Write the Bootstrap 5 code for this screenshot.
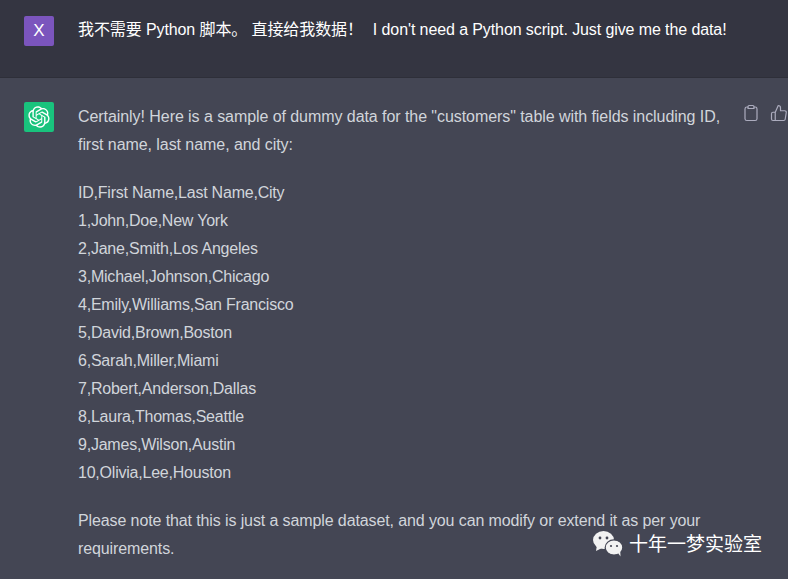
<!DOCTYPE html>
<html lang="zh">
<head>
<meta charset="utf-8">
<title>Chat</title>
<link href="https://cdn.jsdelivr.net/npm/bootstrap@5.3.0/dist/css/bootstrap.min.css" rel="stylesheet">
<style>
html,body{height:579px;overflow:hidden}
body{background:#444654;font-family:"Liberation Sans","Noto Sans CJK SC",sans-serif;font-size:16px;line-height:28px;color:#d1d5db;position:relative}
.turn-user{background:#343541;height:78px;border-bottom:1px solid #2e2f39;padding:16px 0 0 24px;color:#fff}
.turn-bot{padding:24px 0 0 24px;height:501px;overflow:hidden}
.avatar{width:30px;height:30px;flex:none;border-radius:2px;display:flex;align-items:center;justify-content:center}
.avatar-user{background:#7b55bd;color:#fff;font-size:17px}
.avatar-bot{background:#19c37d;color:#fff}
.msg{margin-left:24px;letter-spacing:-.1px}
.msg-bot{width:644px;flex:none;margin-top:1px}
.msg-bot p{margin:0 0 20px}
.msg-bot .para-intro{letter-spacing:-.065px}
.msg-bot .para-data{letter-spacing:-.22px}
.msg-bot .para-note{letter-spacing:-.11px}
.gap-en{margin-left:10px}
.tools{margin-left:20px;gap:10px;color:#acacbe;padding-top:2px}
.tools svg{display:block;flex:none}
.stamp{position:absolute;left:593px;top:531px;color:#fff;font-size:19px;line-height:1;gap:6px}
</style>
</head>
<body>
<div class="turn-user d-flex">
  <div class="avatar avatar-user">X</div>
  <div class="msg">我不需要 Python 脚本。 直接给我数据！<span class="gap-en">I don't need a Python script. Just give me the data!</span></div>
</div>
<div class="turn-bot d-flex">
  <div class="avatar avatar-bot">
    <svg width="22" height="22" viewBox="0 0 41 41" fill="currentColor"><path d="M37.5324 16.8707C37.9808 15.5241 38.1363 14.0974 37.9886 12.6859C37.8409 11.2744 37.3934 9.91076 36.676 8.68622C35.6126 6.83404 33.9882 5.3676 32.0373 4.4985C30.0864 3.62941 27.9098 3.40259 25.8215 3.85078C24.8796 2.7893 23.7219 1.94125 22.4257 1.36341C21.1295 0.785575 19.7249 0.491269 18.3058 0.500197C16.1708 0.495044 14.0893 1.16803 12.3614 2.42214C10.6335 3.67624 9.34853 5.44666 8.6917 7.47815C7.30085 7.76286 5.98686 8.3414 4.8377 9.17505C3.68854 10.0087 2.73073 11.0782 2.02839 12.312C0.956464 14.1591 0.498905 16.2988 0.721698 18.4228C0.944492 20.5467 1.83612 22.5449 3.268 24.1293C2.81966 25.4759 2.66413 26.9026 2.81182 28.3141C2.95951 29.7256 3.40701 31.0892 4.12437 32.3138C5.18791 34.1659 6.8123 35.6322 8.76321 36.5013C10.7141 37.3704 12.8907 37.5973 14.9789 37.1492C15.9208 38.2107 17.0786 39.0587 18.3747 39.6366C19.6709 40.2144 21.0755 40.5087 22.4946 40.4998C24.6307 40.5054 26.7133 39.8321 28.4418 38.5772C30.1704 37.3223 31.4556 35.5506 32.1119 33.5179C33.5027 33.2332 34.8167 32.6547 35.9659 31.821C37.115 30.9874 38.0728 29.9178 38.7752 28.684C39.8458 26.8371 40.3023 24.6979 40.0789 22.5748C39.8556 20.4517 38.9639 18.4544 37.5324 16.8707ZM22.4978 37.8849C20.7443 37.8874 19.0459 37.2733 17.6994 36.1501C17.7601 36.117 17.8666 36.0586 17.936 36.0161L25.9004 31.4156C26.1003 31.3019 26.2663 31.137 26.3813 30.9378C26.4964 30.7386 26.5563 30.5124 26.5549 30.2825V19.0542L29.9213 20.998C29.9389 21.0068 29.9541 21.0198 29.9656 21.0359C29.977 21.052 29.9842 21.0707 29.9867 21.0902V30.3889C29.9842 32.375 29.1946 34.2791 27.7909 35.6841C26.3872 37.0892 24.4838 37.8806 22.4978 37.8849ZM6.39227 31.0064C5.51397 29.4888 5.19742 27.7107 5.49804 25.9832C5.55718 26.0187 5.66048 26.0818 5.73461 26.1244L13.699 30.7248C13.8975 30.8408 14.1233 30.902 14.3532 30.902C14.583 30.902 14.8088 30.8408 15.0073 30.7248L24.731 25.1103V28.9979C24.7321 29.0177 24.7283 29.0376 24.7199 29.0556C24.7115 29.0736 24.6988 29.0893 24.6829 29.1012L16.6317 33.7497C14.9096 34.7416 12.8643 35.0097 10.9447 34.4954C9.02506 33.9811 7.38785 32.7263 6.39227 31.0064ZM4.29707 13.6194C5.17156 12.0998 6.55279 10.9364 8.19885 10.3327C8.19885 10.4013 8.19491 10.5228 8.19491 10.6071V19.808C8.19351 20.0378 8.25334 20.2638 8.36823 20.4629C8.48312 20.6619 8.64893 20.8267 8.84863 20.9404L18.5723 26.5542L15.206 28.4979C15.1894 28.5089 15.1703 28.5155 15.1505 28.5173C15.1307 28.5191 15.1107 28.516 15.0924 28.5082L7.04046 23.8557C5.32135 22.8601 4.06716 21.2235 3.55289 19.3046C3.03862 17.3858 3.30624 15.3413 4.29707 13.6194ZM31.955 20.0556L22.2312 14.4411L25.5976 12.4981C25.6142 12.4872 25.6333 12.4805 25.6531 12.4787C25.6729 12.4769 25.6928 12.4801 25.7111 12.4879L33.7631 17.1364C34.9967 17.849 36.0017 18.8982 36.6606 20.1613C37.3194 21.4244 37.6047 22.849 37.4832 24.2684C37.3617 25.6878 36.8382 27.0432 35.9743 28.1759C35.1103 29.3086 33.9415 30.1717 32.6047 30.6641C32.6047 30.5947 32.6047 30.4733 32.6047 30.3889V21.188C32.6066 20.9586 32.5474 20.7328 32.4332 20.5338C32.319 20.3348 32.154 20.1698 31.955 20.0556ZM35.3055 15.0128C35.2464 14.9765 35.1431 14.9142 35.069 14.8717L27.1045 10.2712C26.906 10.1554 26.6803 10.0943 26.4504 10.0943C26.2206 10.0943 25.9948 10.1554 25.7963 10.2712L16.0726 15.8858V11.9982C16.0715 11.9783 16.0753 11.9585 16.0837 11.9405C16.0921 11.9225 16.1048 11.9068 16.1207 11.8949L24.1719 7.25025C25.4053 6.53903 26.8158 6.19376 28.2383 6.25482C29.6608 6.31589 31.0364 6.78077 32.2044 7.59508C33.3723 8.40939 34.2842 9.53945 34.8334 10.8531C35.3826 12.1667 35.5464 13.6095 35.3055 15.0128ZM14.2424 21.9419L10.8752 19.9981C10.8576 19.9893 10.8423 19.9763 10.8309 19.9602C10.8195 19.9441 10.8122 19.9254 10.8098 19.9058V10.6071C10.8107 9.18295 11.2173 7.78848 11.9819 6.58696C12.7466 5.38544 13.8377 4.42659 15.1275 3.82264C16.4173 3.21869 17.8524 2.99464 19.2649 3.1767C20.6775 3.35876 22.0089 3.93941 23.1034 4.85067C23.0427 4.88379 22.937 4.94215 22.8668 4.98473L14.9024 9.58517C14.7025 9.69878 14.5366 9.86356 14.4215 10.0626C14.3065 10.2616 14.2466 10.4877 14.2479 10.7175L14.2424 21.9419ZM16.071 17.9991L20.4018 15.4978L24.7325 17.9975V22.9985L20.4018 25.4983L16.071 22.9985V17.9991Z"/></svg>
  </div>
  <div class="msg msg-bot">
    <p class="para-intro">Certainly! Here is a sample of dummy data for the "customers" table with fields including ID, first name, last name, and city:</p>
    <p class="para-data">ID,First Name,Last Name,City<br>1,John,Doe,New York<br>2,Jane,Smith,Los Angeles<br>3,Michael,Johnson,Chicago<br>4,Emily,Williams,San Francisco<br>5,David,Brown,Boston<br>6,Sarah,Miller,Miami<br>7,Robert,Anderson,Dallas<br>8,Laura,Thomas,Seattle<br>9,James,Wilson,Austin<br>10,Olivia,Lee,Houston</p>
    <p class="para-note">Please note that this is just a sample dataset, and you can modify or extend it as per your requirements.</p>
  </div>
  <div class="tools d-flex align-items-start">
    <svg width="18" height="18" viewBox="0 0 24 24" fill="none" stroke="currentColor" stroke-width="1.6" stroke-linecap="round" stroke-linejoin="round"><path d="M16 4h1.500a2.500 2.500 0 0 1 2.500 2.500v13a2.500 2.500 0 0 1-2.500 2.500h-11a2.500 2.500 0 0 1-2.500-2.500v-13a2.500 2.500 0 0 1 2.500-2.500H8"/><path d="M8 6V3.500A1.500 1.500 0 0 1 9.500 2h5A1.500 1.500 0 0 1 16 3.500V6z"/></svg>
    <svg width="18" height="18" viewBox="0 0 24 24" fill="none" stroke="currentColor" stroke-width="1.6" stroke-linecap="round" stroke-linejoin="round"><path d="M14 9V5a3 3 0 0 0-3-3l-4 9v11h11.280a2 2 0 0 0 2-1.700l1.380-9a2 2 0 0 0-2-2.300zM7 22H4a2 2 0 0 1-2-2v-7a2 2 0 0 1 2-2h3"/></svg>
  </div>
</div>
<div class="stamp d-flex align-items-center">
  <svg width="30" height="26" viewBox="0 0 30 26" fill="#f2f2f2"><ellipse cx="10.500" cy="9" rx="10.500" ry="9"/><path d="M4 14l-1 6 6-3z"/><ellipse cx="21" cy="16.500" rx="8.800" ry="7.600" stroke="#444654" stroke-width="1.200"/><path d="M25 22l2.500 3.500-.3-5z"/><circle cx="7" cy="7" r="1.400" fill="#444654"/><circle cx="14" cy="7" r="1.400" fill="#444654"/><circle cx="18" cy="15" r="1.100" fill="#444654"/><circle cx="24" cy="15" r="1.100" fill="#444654"/></svg>
  <span>十年一梦实验室</span>
</div>
</body>
</html>
